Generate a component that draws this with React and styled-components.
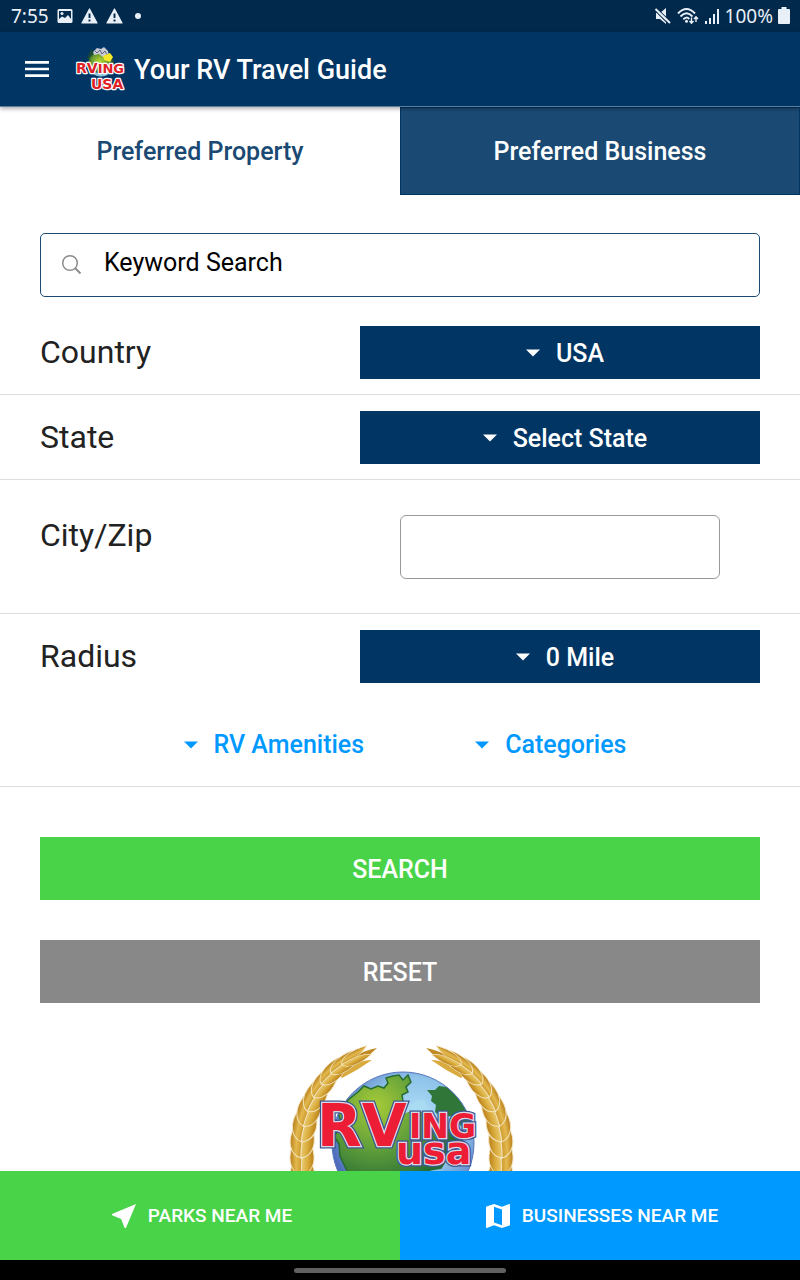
import React from "react";
import styled, { createGlobalStyle } from "styled-components";
import { MdMenu, MdNearMe, MdMap } from "react-icons/md";

const navy = "#003564";
const slate = "#1a4a73";
const green = "#48d348";
const blue = "#0099ff";

const GlobalStyle = createGlobalStyle`
  *, *::before, *::after { box-sizing: border-box; }
  body { margin: 0; background: #fff; font-family: Roboto, "Liberation Sans", sans-serif; }
  button, input, select { font: inherit; color: inherit; margin: 0; }
  button, select { cursor: pointer; }
`;

const Screen = styled.div`
  display: flex;
  flex-direction: column;
  height: 100vh;
  background: #fff;
`;

const StatusBar = styled.div`
  display: flex;
  align-items: center;
  justify-content: space-between;
  flex: none;
  height: 32px;
  padding: 0 10px 0 11px;
  background: #00294c;
  color: #e9eff6;
  font-family: "Noto Sans", sans-serif;
  font-size: 19px;
  line-height: 32px;
`;

const StatusGroup = styled.div`
  display: flex;
  align-items: center;
  gap: ${(p) => p.$gap}px;
`;

const Header = styled.header`
  position: relative;
  z-index: 1;
  display: flex;
  align-items: center;
  flex: none;
  height: 75px;
  padding: 0 21px;
  background: ${navy};
  color: #fff;
  border-bottom: 1px solid #5d7f9e;
  box-shadow: 0 2px 4px rgba(0, 0, 0, 0.3);
`;

const MenuButton = styled.button`
  display: flex;
  padding: 0;
  border: 0;
  background: none;
  margin-right: 22px;
`;

const Title = styled.h1`
  margin: 0 0 0 8px;
  padding-top: 2px;
  font-size: 27px;
  line-height: 32px;
  font-weight: 500;
`;

const Tabs = styled.div`
  display: grid;
  grid-template-columns: 1fr 1fr;
  flex: none;
  height: 88px;
`;

const Tab = styled.button`
  border: 1px solid ${(p) => (p.$active ? "#fff" : navy)};
  background: ${(p) => (p.$active ? "#fff" : slate)};
  color: ${(p) => (p.$active ? slate : "#fff")};
  font-size: 25px;
  font-weight: 500;
`;

const Content = styled.main`
  flex: 1;
  min-height: 0;
  overflow-y: auto;
  scrollbar-width: none;
`;

const SearchBox = styled.label`
  display: flex;
  align-items: center;
  height: 64px;
  margin: 38px 40px 13px;
  padding: 0 20px 2px;
  gap: 22px;
  border: 1px solid ${slate};
  border-radius: 5px;
`;

const SearchInput = styled.input`
  flex: 1;
  min-width: 0;
  height: 56px;
  padding: 0 0 4px;
  border: 0;
  outline: 0;
  background: none;
  color: #000;
  font-size: 25px;
  &::placeholder { color: #000; opacity: 1; }
`;

const Row = styled.div`
  display: grid;
  grid-template-columns: 4fr 5fr;
  align-items: ${(p) => (p.$tall ? "start" : "center")};
  padding: ${(p) => (p.$tall ? "35px 40px 34px" : "16px 40px 15px")};
  border-bottom: ${(p) => (p.$plain ? "0" : "1px solid #dedede")};
`;

const RowLabel = styled.label`
  padding-bottom: 2px;
  color: #222;
  font-size: 32px;
  line-height: 40px;
`;

const TextField = styled.input`
  height: 64px;
  margin: 0 40px;
  padding: 0 16px;
  min-width: 0;
  border: 1px solid #999;
  border-radius: 6px;
  background: #fff;
  font-size: 25px;
`;

const Picker = styled.div`
  display: flex;
  align-items: center;
  justify-content: center;
  gap: 6px;
  height: 53px;
  background: ${(p) => (p.$link ? "none" : navy)};
  color: ${(p) => (p.$link ? blue : "#fff")};
`;

const PickerSelect = styled.select`
  appearance: none;
  field-sizing: content;
  height: 100%;
  padding: ${(p) => (p.$link ? "0" : "2px")} 0 0;
  border: 0;
  background: none;
  font-size: 25px;
  font-weight: 500;
  option { color: #222; }
`;

const Filters = styled.div`
  display: flex;
  justify-content: center;
  gap: 101px;
  padding: 20px 40px 15px;
  border-bottom: 1px solid #dedede;
`;

const Actions = styled.div`
  display: grid;
  gap: 40px;
  padding: 50px 40px 40px;
`;

const Action = styled.button`
  height: 63px;
  padding: 2px 0 0;
  border: 0;
  background: ${(p) => (p.$muted ? "#888" : green)};
  color: #fff;
  font-size: 25px;
  font-weight: 500;
`;

const EmblemWrap = styled.div`
  display: flex;
  justify-content: center;
  padding-bottom: 40px;
`;

const BottomBar = styled.nav`
  display: grid;
  grid-template-columns: 1fr 1fr;
  flex: none;
  height: 89px;
`;

const NearLink = styled.a`
  display: flex;
  align-items: center;
  justify-content: center;
  gap: 8px;
  background: ${(p) => (p.$parks ? green : blue)};
  color: #fff;
  font-size: 19px;
  font-weight: 500;
  text-decoration: none;
`;

const GestureBar = styled.div`
  display: flex;
  align-items: center;
  justify-content: center;
  flex: none;
  height: 20px;
  background: #000;
`;

const GesturePill = styled.div`
  width: 212px;
  height: 5px;
  border-radius: 3px;
  background: #606060;
`;

function Caret() {
  return (
    <svg width="34" height="34" viewBox="0 0 34 34" fill="currentColor" aria-hidden="true">
      <path d="M10 13.500h14l-7 7z" />
    </svg>
  );
}

function PickerControl({ id, label, value, link }) {
  return (
    <Picker $link={link}>
      <Caret />
      <PickerSelect id={id} aria-label={label} defaultValue={value} $link={link}>
        <option>{value}</option>
      </PickerSelect>
    </Picker>
  );
}

function WarningIcon() {
  return (
    <svg width="17" height="16" viewBox="0 0 17 16" aria-hidden="true">
      <path d="M8.500 1L16 15H1z" fill="currentColor" stroke="currentColor" strokeWidth="1.200" strokeLinejoin="round" />
      <path d="M8.500 5.500V10M8.500 11.500V13.500" stroke="#00294c" strokeWidth="1.900" />
    </svg>
  );
}

function StatusIcons() {
  return (
    <StatusGroup $gap={5}>
      <svg width="16" height="16" viewBox="0 0 16 16" aria-hidden="true">
        <path d="M1 5h4L11 0v16L5 11H1z" fill="currentColor" />
        <path d="M-.5 2L13.500 16M1.500 0L15.500 14" stroke="#00294c" strokeWidth="1.200" />
        <path d="M.5 1L15 15" stroke="currentColor" strokeWidth="2" />
      </svg>
      <svg width="23" height="18" viewBox="0 0 23 18" fill="none" stroke="currentColor" strokeWidth="1.900" aria-hidden="true">
        <path d="M2 6.500Q10.500-2.500 19 6.500M4.500 9.500Q10.500 3 16.500 9.500M7.300 12.300Q10.500 9 13.300 12" />
        <circle cx="10.500" cy="14.300" r="1.500" fill="currentColor" stroke="none" />
        <path d="M15.500 10.500V16M13.500 14L15.500 16.200 17.500 14M20 15V10M18 12L20 9.800 22 12" strokeWidth="1.400" />
      </svg>
      <svg width="16" height="17" viewBox="0 0 16 17" fill="currentColor" aria-hidden="true">
        <path d="M1 13h2v3H1zM5 10h2v6H5zM9 6h2v10H9zM13 1h2v15h-2z" />
      </svg>
      <span>100%</span>
      <svg width="12" height="18" viewBox="0 0 12 18" fill="currentColor" aria-hidden="true">
        <path d="M3.500 0h5v2H11q1 0 1 1v13q0 1-1 1H1q-1 0-1-1V3q0-1 1-1h2.500z" />
      </svg>
    </StatusGroup>
  );
}

function HeaderLogo() {
  return (
    <svg width="51" height="46" viewBox="0 0 51 46" role="img" aria-label="RVing USA">
      <defs>
        <radialGradient id="smallGlobe" cx="45%" cy="40%">
          <stop offset="0" stopColor="#b5d936" />
          <stop offset="0.600" stopColor="#6d9d2e" />
          <stop offset="1" stopColor="#244e38" />
        </radialGradient>
      </defs>
      <path d="M12 13L16 3l3 5 2 6z" fill="#174b35" />
      <ellipse cx="26" cy="18" rx="13" ry="12" fill="url(#smallGlobe)" />
      <path d="M15 23q11 9 22-1l-3 6q-8 5-16 0z" fill="#8fc4de" />
      <path d="M18 6l4-4 4 1 3-2 4 4 1 5-6 1-4-3-5 1z" fill="#c9ccd4" />
      <path d="M20 5l2 2 3-3 2 4 3-3 2 4" fill="none" stroke="#5c6480" strokeWidth="1" />
      <path d="M28 10l7-3 3 4-3 5-6-2z" fill="#f4e628" />
      <g fontFamily="'DejaVu Sans', sans-serif" fontWeight="700" fill="#df2026" stroke="#fff" strokeWidth="2.400" paintOrder="stroke" strokeLinejoin="round">
        <text x="1" y="27" fontSize="14">RV<tspan fontSize="13">ING</tspan></text>
        <text x="16" y="43" fontSize="14">USA</text>
      </g>
    </svg>
  );
}

// Centre line of the left wheat branch: x, y and lean of each pair of grains.
const branch = [
  [74, 18, 62], [62, 25, 54], [51, 34, 45], [42, 46, 37], [34, 59, 28],
  [28, 73, 19], [24, 88, 11], [22, 104, 4], [22, 121, 0], [23, 138, -6],
  [27, 154, -14], [34, 169, -24], [44, 183, -34], [57, 195, -46], [73, 204, -60],
];

function Branch() {
  return (
    <g strokeWidth="1">
      <path d="M57 31Q74 12 97 8Q86 20 64 27Z" fill="#c08a26" />
      <path d="M60 36Q74 20 92 20Q78 30 62 38Z" fill="#d9ab3e" />
      {branch.slice().reverse().map(([x, y, angle], i) => {
        const fromTip = branch.length - 1 - i;
        const s = fromTip < 6 ? 0.55 + fromTip * 0.08 : 1;
        return (
          <g key={y} stroke="#f3e6c4" transform={`translate(${x} ${y}) rotate(${angle}) scale(${s} 1)`}>
            <path d="M0 14C-10 12-16 0-9-17C-2-11 2-4 0 14Z" fill="url(#grainLeft)" />
            <path d="M0 14C10 12 16 0 9-17C2-11-2-4 0 14Z" fill="url(#grainRight)" />
          </g>
        );
      })}
    </g>
  );
}

function Emblem() {
  return (
    <svg width="236" height="220" viewBox="2 3 236 220" role="img" aria-label="RVing USA emblem">
      <defs>
        <linearGradient id="grainLeft" x1="0" x2="1">
          <stop offset="0" stopColor="#b77e1c" />
          <stop offset="0.500" stopColor="#e3b94e" />
          <stop offset="1" stopColor="#c9942a" />
        </linearGradient>
        <linearGradient id="grainRight" x1="0" x2="1">
          <stop offset="0" stopColor="#e9cb72" />
          <stop offset="0.500" stopColor="#d9aa3a" />
          <stop offset="1" stopColor="#b87e1a" />
        </linearGradient>
        <radialGradient id="ocean" cx="58%" cy="38%" r="62%">
          <stop offset="0" stopColor="#b8e6f8" />
          <stop offset="0.550" stopColor="#8fc3ea" />
          <stop offset="1" stopColor="#4a68b8" />
        </radialGradient>
        <radialGradient id="land" gradientUnits="userSpaceOnUse" cx="96" cy="66" r="84">
          <stop offset="0" stopColor="#a8cb38" />
          <stop offset="0.500" stopColor="#62a03a" />
          <stop offset="1" stopColor="#256c35" />
        </radialGradient>
        <clipPath id="globeClip"><circle cx="123" cy="103" r="71" /></clipPath>
        <g id="wordmark" fontFamily="'DejaVu Sans', sans-serif" fontWeight="700">
          <text x="37" y="106" fontSize="58">RV</text>
          <text x="129" y="98" fontSize="33">ING</text>
          <text x="116" y="124" fontSize="38">usa</text>
        </g>
      </defs>
      <Branch />
      <g transform="translate(243 0) scale(-1 1)"><Branch /></g>
      <circle cx="123" cy="103" r="71" fill="url(#ocean)" />
      <g clipPath="url(#globeClip)">
        <path d="M58 72L68 60 78 52 84 46 91 49 98 46 104 48 108 43 106 38 113 36 119 35 123 40 128 35 131 42 126 47 128 52 122 55 123 61 121 66 128 72 138 69 146 70 151 76 160 88 178 92 184 104 174 112 166 120 161 128 150 130 141 134 128 135 116 139 113 150 117 162 101 151 83 145 68 133 60 116 59 104 54 96 62 86Z" fill="url(#land)" stroke="#276c32" strokeWidth="1.500" />
        <path d="M147 50L155 50 159 46 166 47 168 40 183 52 194 68 192 84 187 82 181 86 176 78 169 76 163 79 155 72 156 65 151 61 152 56Z" fill="#2f7638" />
        <path d="M124 72q8-12 20-12l4 8 4 8-6-3q-11-4-20 0z" fill="#a9dcf3" />
        <path d="M112 168Q135 145 164 155L159 178 125 178Z" fill="#3c7c34" />
      </g>
      <circle cx="123" cy="103" r="71" fill="none" stroke="#5876be" strokeWidth="1" />
      <g strokeLinejoin="miter">
        <use href="#wordmark" fill="#3d568e" stroke="#3d568e" strokeWidth="5" />
        <use href="#wordmark" fill="#fff" stroke="#d7dbe8" strokeWidth="2.500" />
        <use href="#wordmark" fill="#ee1d36" />
      </g>
    </svg>
  );
}

export default function App() {
  return (
    <Screen>
      <GlobalStyle />
      <StatusBar>
        <StatusGroup $gap={8}>
          <span>7:55</span>
          <svg width="16" height="16" viewBox="0 0 16 16" aria-hidden="true">
            <path d="M2 1h12q1.500 0 1.500 1.500v11q0 1.500-1.500 1.500H2Q.5 15 .5 13.500v-11Q.5 1 2 1z" fill="currentColor" />
            <path d="M2 3h12v8l-3-4-3 3-3-1.500L2 11z" fill="#00294c" />
            <circle cx="5" cy="5.500" r="1.500" fill="currentColor" />
          </svg>
          <WarningIcon />
          <WarningIcon />
          <svg width="16" height="16" viewBox="0 0 16 16" aria-hidden="true">
            <circle cx="7" cy="8" r="3" fill="currentColor" />
          </svg>
        </StatusGroup>
        <StatusIcons />
      </StatusBar>

      <Header>
        <MenuButton aria-label="Menu"><MdMenu size={32} /></MenuButton>
        <HeaderLogo />
        <Title>Your RV Travel Guide</Title>
      </Header>

      <Tabs role="tablist">
        <Tab role="tab" aria-selected="true" $active>Preferred Property</Tab>
        <Tab role="tab" aria-selected="false">Preferred Business</Tab>
      </Tabs>

      <Content>
        <SearchBox>
          <svg width="21" height="21" viewBox="0 0 21 21" fill="none" stroke="#8c8c8c" aria-hidden="true">
            <circle cx="9" cy="9" r="7.300" strokeWidth="1.500" />
            <path d="M14 14l5.500 5.500" strokeWidth="2" />
          </svg>
          <SearchInput type="search" aria-label="Keyword Search" placeholder="Keyword Search" />
        </SearchBox>

        <Row>
          <RowLabel htmlFor="country">Country</RowLabel>
          <PickerControl id="country" value="USA" />
        </Row>
        <Row>
          <RowLabel htmlFor="state">State</RowLabel>
          <PickerControl id="state" value="Select State" />
        </Row>
        <Row $tall>
          <RowLabel htmlFor="city">City/Zip</RowLabel>
          <TextField id="city" type="text" />
        </Row>
        <Row $plain>
          <RowLabel htmlFor="radius">Radius</RowLabel>
          <PickerControl id="radius" value="0 Mile" />
        </Row>
        <Filters>
          <PickerControl id="amenities" label="RV Amenities" value="RV Amenities" link />
          <PickerControl id="categories" label="Categories" value="Categories" link />
        </Filters>

        <Actions>
          <Action type="button">SEARCH</Action>
          <Action type="button" $muted>RESET</Action>
        </Actions>
        <EmblemWrap><Emblem /></EmblemWrap>
      </Content>

      <BottomBar>
        <NearLink href="#parks" $parks><MdNearMe size={32} />PARKS NEAR ME</NearLink>
        <NearLink href="#businesses"><MdMap size={32} />BUSINESSES NEAR ME</NearLink>
      </BottomBar>
      <GestureBar><GesturePill /></GestureBar>
    </Screen>
  );
}
